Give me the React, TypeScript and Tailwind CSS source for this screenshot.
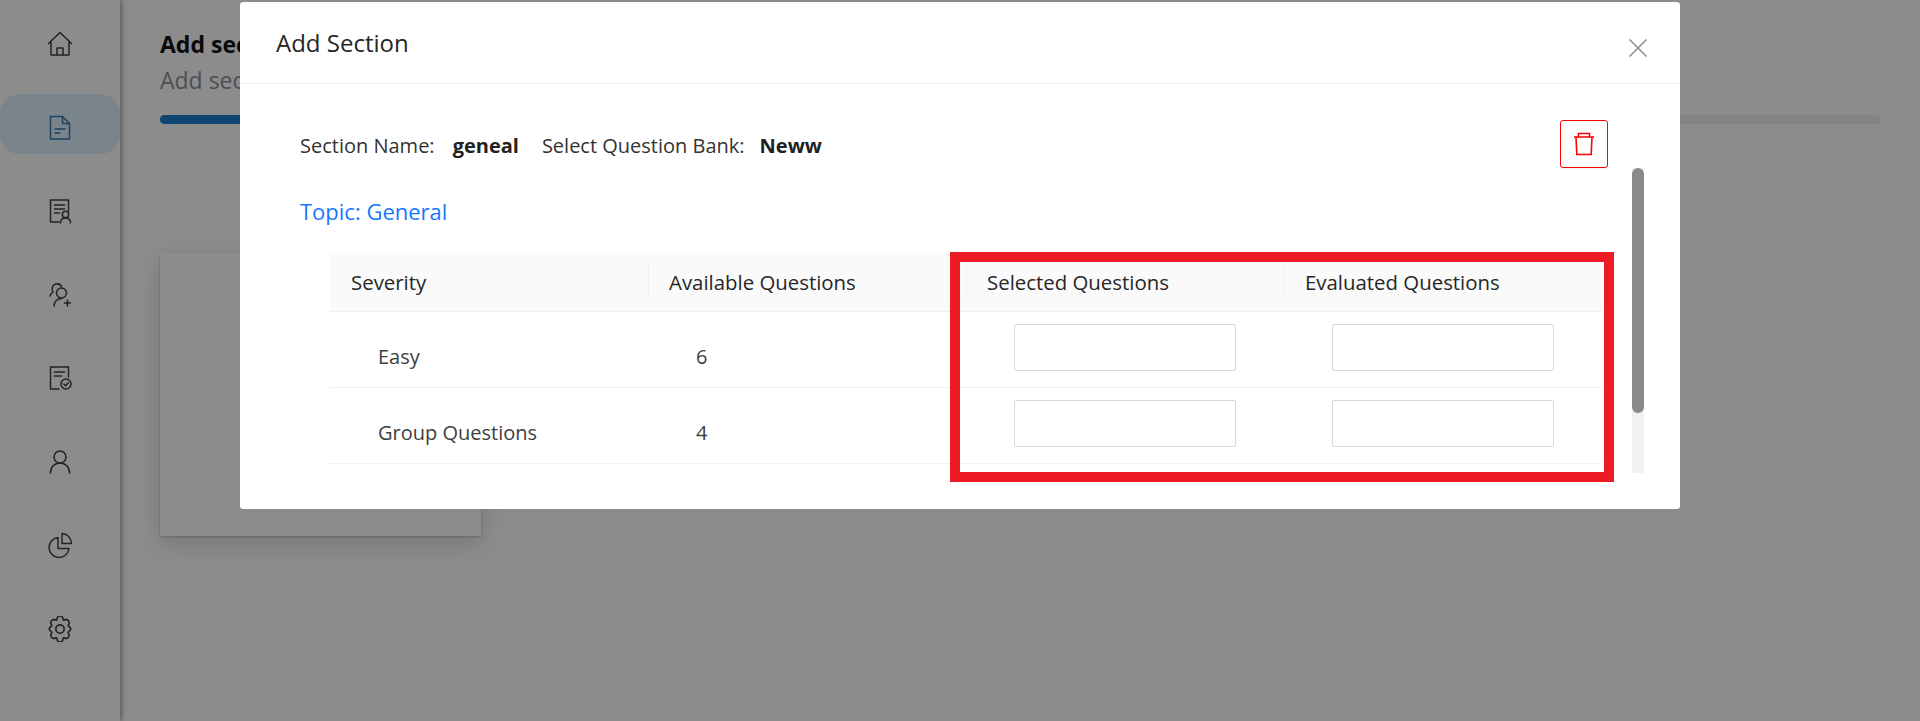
const font = "font-['Open_Sans','Noto_Sans',sans-serif]";

function NavIcon({ children, color = "#404040" }: { children: React.ReactNode; color?: string }) {
  return (
    <svg width="26" height="26" viewBox="0 0 26 26" fill="none" stroke={color} strokeWidth="1.5" strokeLinejoin="round" strokeLinecap="round">
      {children}
    </svg>
  );
}

const navItems = [
  {
    key: "home",
    icon: (
      <NavIcon>
        <path d="M1.5 12.5 13 1.5l11.500 11M4 10.500V24h18V10.500" />
        <path d="M10 24v-7h6v7" />
      </NavIcon>
    ),
  },
  {
    key: "sections",
    active: true,
    icon: (
      <NavIcon color="#3a78b5">
        <path d="M3.500 1.500h12l7 7V24h-19z" />
        <path d="M15.500 1.500v7h7M8 14h10M8 18h5" />
      </NavIcon>
    ),
  },
  {
    key: "candidates",
    icon: (
      <NavIcon>
        <path d="M12 24H3.500V2h18v11" />
        <path d="M7.500 7h10M7.500 11h10M7.500 15h5" />
        <circle cx="18.500" cy="16.500" r="3.200" />
        <path d="M13.500 25c0-3 2-5 5-5s5 2 5 5" />
      </NavIcon>
    ),
  },
  {
    key: "invite",
    icon: (
      <NavIcon>
        <path d="M3 14c1-2.500 2-3 3-4-1.500-2-1.500-7 3-8 3-.5 5 1 5.500 3" />
        <circle cx="14.500" cy="11" r="5" />
        <path d="M7 24c0-4 3-7.500 7.500-7.500" />
        <path d="M20.500 18v6M17.500 21h6" />
      </NavIcon>
    ),
  },
  {
    key: "results",
    icon: (
      <NavIcon>
        <path d="M12 24H3.500V2h18v10" />
        <path d="M7.500 7h10M7.500 11h7" />
        <circle cx="19" cy="19" r="5" />
        <path d="m16.800 19 1.700 1.700 2.800-3" />
      </NavIcon>
    ),
  },
  {
    key: "profile",
    icon: (
      <NavIcon>
        <circle cx="13" cy="8" r="6" />
        <path d="M3.500 24c0-6 4-10 9.500-10s9.500 4 9.500 10" />
      </NavIcon>
    ),
  },
  {
    key: "reports",
    icon: (
      <NavIcon>
        <path d="M11 5.500a10 10 0 1 0 11 11H11z" />
        <path d="M15 1.500c5 0 9.500 4.500 9.500 10H15z" />
      </NavIcon>
    ),
  },
  {
    key: "settings",
    icon: (
      <NavIcon>
        <g transform="translate(13 13) scale(1.100) translate(-13 -13)">
          <circle cx="13" cy="13" r="3.800" />
          <path d="M10.700 2.200 13 1l2.300 1.200.8 2.700 2.700-.6 1.900.9.700 2.300-1 2.500 2 1.900.4 1.100-.4 1.100-2 1.900 1 2.500-.7 2.300-1.900.9-2.700-.6-.8 2.700L13 25l-2.300-1.200-.8-2.700-2.700.6-1.900-.9-.7-2.300 1-2.500-2-1.900L3.200 13l.4-1.100 2-1.900-1-2.500.7-2.300 1.900-.9 2.700.6z" />
        </g>
      </NavIcon>
    ),
  },
];

const rows = [
  { severity: "Easy", available: 6 },
  { severity: "Group Questions", available: 4 },
];

const columns = ["Severity", "Available Questions", "Selected Questions", "Evaluated Questions"];

export default function App() {
  return (
    <div className={`relative flex h-[721px] w-[1920px] overflow-hidden bg-white ${font}`}>
      {/* page behind the modal */}
      <aside className="flex h-full w-[120px] shrink-0 flex-col pt-[10px] shadow-[2px_0_5px_rgba(0,0,0,0.35)]">
        {navItems.map((item) => (
          <div
            key={item.key}
            className={`mb-[23.500px] flex h-[60px] items-center justify-center rounded-[20px] pt-[8px] ${item.active ? "bg-[#dff0fd]" : ""}`}
          >
            {item.icon}
          </div>
        ))}
      </aside>

      <main className="flex-1 pl-[40px] pr-[39px] pt-[28px]">
        <h1 className="text-[23px] font-bold leading-[32px] text-[#111]">Add section</h1>
        <p className="mt-[4px] text-[23px] leading-[32px] text-[#8a9099]">Add section</p>
        <div className="mt-[19px] h-[9px] rounded-full bg-[#f0f0f0]">
          <div className="h-full w-[50%] rounded-full bg-[#1b7fd1]" />
        </div>
        <div className="mt-[129px] h-[283px] w-[321px] bg-white shadow-[0_1px_2px_rgba(0,0,0,0.2),0_8px_24px_rgba(0,0,0,0.16)]" />
      </main>

      {/* mask */}
      <div className="absolute inset-0 bg-black/45" />

      {/* modal */}
      <div className="absolute left-[240px] top-[2px] flex h-[507px] w-[1440px] flex-col rounded-[3px] bg-white">
        <div className="flex h-[82px] shrink-0 items-start justify-between border-b border-[#f0f0f0] pl-[36px] pr-[33px]">
          <h2 className="mt-[24px] text-[24px] font-medium leading-[34px] text-[#262626]">Add Section</h2>
          <svg className="mt-[37px]" width="18" height="18" viewBox="0 0 18 18" stroke="#8c8c8c" strokeWidth="1.500">
            <path d="M.5.5l17 17M17.500.5l-17 17" />
          </svg>
        </div>

        <div className="flex min-h-0 flex-1 pl-[60px]">
          <div className="min-w-0 flex-1">
            <div className="mt-[36px] flex h-[48px] items-center justify-between">
              <div className="flex items-center pt-[3px] text-[20px] text-[#333]">
                <span>Section Name:</span>
                <span className="ml-[18px] font-bold text-[#222]">geneal</span>
                <span className="ml-[23px]">Select Question Bank:</span>
                <span className="ml-[15px] font-bold text-[#222]">Neww</span>
              </div>
              <button className="flex h-[48px] w-[48px] items-center justify-center rounded-[3px] border border-[#ff0000] bg-white shadow-[0_2px_0_rgba(0,0,0,0.04)]">
                <svg width="22" height="24" viewBox="0 0 22 24" fill="none" stroke="#ff0000" strokeWidth="1.600">
                  <path d="M1 5h20M5.500 5V1.500h11V5M3 5l.8 17.500h14.400L19 5" />
                </svg>
              </button>
            </div>

            <p className="mt-[26px] text-[22px] leading-[34px] text-[#1677ff]">Topic: General</p>

            <table className="ml-[30px] mt-[25px] w-[1272px] table-fixed border-collapse">
              <thead>
                <tr className="h-[58px] border-b border-[#f0f0f0] bg-[#fafafa]">
                  {columns.map((col, i) => (
                    <th key={col} className="relative pl-[21px] pr-[10px] pt-[2px] text-left text-[20.400px] font-medium text-[#262626]">
                      {i > 0 && <span className="absolute left-0 top-[11px] h-[34px] w-px bg-[#f0f0f0]" />}
                      {col}
                    </th>
                  ))}
                </tr>
              </thead>
              <tbody>
                {rows.map((row) => (
                  <tr key={row.severity} className="h-[76px] border-b border-[#f0f0f0]">
                    <td className="pl-[48px] pt-[15px] text-[20px] text-[#404040]">{row.severity}</td>
                    <td className="pl-[48px] pt-[15px] text-[20px] text-[#404040]">{row.available}</td>
                    <td className="pb-[3px]">
                      <input className="mx-auto block h-[47px] w-[222px] rounded-[2px] border border-[#d9d9d9] bg-white" />
                    </td>
                    <td className="pb-[3px]">
                      <input className="mx-auto block h-[47px] w-[222px] rounded-[2px] border border-[#d9d9d9] bg-white" />
                    </td>
                  </tr>
                ))}
              </tbody>
            </table>
          </div>

          {/* scrollbar */}
          <div className="ml-[24px] mr-[36px] mt-[84px] h-[305px] w-[12px] shrink-0 bg-[#f1f1f1]">
            <div className="h-[245px] rounded-full bg-[#8a8a8a]" />
          </div>
        </div>
      </div>

      {/* annotation */}
      <div className="absolute left-[950px] top-[252px] h-[230px] w-[664px] border-[10px] border-[#ed1c24]" />
    </div>
  );
}
